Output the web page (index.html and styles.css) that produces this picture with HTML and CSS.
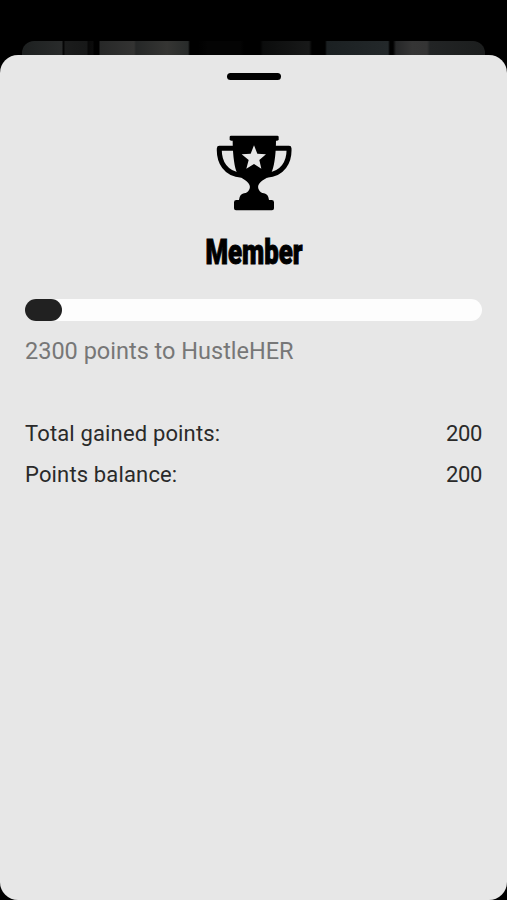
FILE: index.html
```html
<!DOCTYPE html>
<html lang="en">
<head>
  <meta charset="UTF-8" />
  <title>Member</title>
  <link rel="stylesheet" href="styles.css">
</head>
<body>
  <div class="backdrop"></div>
  <div class="sheet">
    <div class="handle"></div>
    <svg class="trophy" viewBox="63 29 228 228">
      <path d="M108 31H247Q251 31 251 35V42Q251 46 246 46H109Q104 46 104 42V35Q104 31 108 31Z"/>
      <path d="M113 44H243C243 75 240 115 231 138C225 156 208 161 197 170C189 178 187 185 192 194Q196 203 207 204Q220 206 222 224H230Q237 224 237 231V249Q237 255 231 255H123Q117 255 117 249V231Q117 224 124 224H132Q134 206 147 204Q158 203 162 194C167 185 165 178 157 170C147 161 131 156 124 138C116 115 113 75 113 44Z"/>
      <path class="handles" d="M117 69H73C71 110 92 147 140 150M239 69H282C284 110 263 147 215 150"/>
      <path class="star" d="M177 60L187 85L213 87L193 104L199 130L177 116L154 130L161 104L140 87L167 85Z"/>
    </svg>
    <h2><span>Member</span></h2>
    <div class="progress">
      <div class="bar" style="width: 8%"></div>
    </div>
    <p class="next">2300 points to HustleHER</p>
    <div class="row">
      <span class="label">Total gained points:</span>
      <span class="value">200</span>
    </div>
    <div class="row">
      <span class="label">Points balance:</span>
      <span class="value">200</span>
    </div>
  </div>
</body>
</html>
```

FILE: styles.css
```css
body {
  background-color: #000;
  font-family: Roboto, "Liberation Sans", sans-serif;
  display: flex;
  flex-direction: column;
  height: 900px;
  margin: 0;
  overflow: hidden;
}

.backdrop {
  height: 14px;
  margin: 41px 22px 0;
  border-radius: 12px 12px 0 0;
  background: linear-gradient(90deg,
    #1d2020 0, #292b2b 40px, #060606 41px, #060606 42px,
    #1b1c1c 43px, #171818 65px, #080808 66px, #0b0b0b 71px,
    #000 72px, #000 77px, #272828 78px, #333332 112px,
    #252727 114px, #353533 145px, #282b2a 166px, #000 168px,
    #000 176px, #040404 186px, #040404 218px, #000 222px,
    #000 238px, #0b0c0c 241px, #181919 287px, #000 290px,
    #000 303px, #1b2022 305px, #23282a 366px, #000 368px,
    #000 371px, #262728 374px, #353535 390px, #343434 405px,
    #222425 408px, #1c1e1e 462px);
}

.sheet {
  flex: 1;
  display: flex;
  flex-direction: column;
  box-sizing: border-box;
  padding: 18px 25px 0;
  border-radius: 18px;
  background-color: #e7e7e7;
}

.handle {
  width: 54px;
  height: 7px;
  margin-left: 202px;
  border-radius: 4px;
  background-color: #000;
}

.trophy {
  width: 76px;
  height: 76px;
  margin: 55px 0 0 191px;
}

.handles {
  fill: none;
  stroke: #000;
  stroke-width: 15;
  stroke-linejoin: round;
}

.star {
  fill: #e7e7e7;
}

h2 {
  height: 42px;
  margin: 21px 0 0;
  color: #000;
  font-size: 35px;
  font-weight: 900;
  line-height: 42px;
  text-align: center;
}

h2 span {
  display: inline-block;
  transform: scaleX(0.735);
  -webkit-text-stroke: 1px #000;
}

.progress {
  height: 22px;
  margin-top: 25px;
  border-radius: 11px;
  background-color: #fdfdfd;
}

.bar {
  height: 22px;
  border-radius: 11px;
  background-color: #212121;
}

.next {
  height: 30px;
  margin: 15px 0 53px;
  color: #777;
  font-size: 23.5px;
  font-weight: 400;
  line-height: 30px;
  white-space: nowrap;
}

.row {
  display: flex;
  justify-content: space-between;
  height: 41px;
  color: #2a2a2a;
  font-size: 22px;
  font-weight: 400;
  line-height: 30px;
}

.label {
  letter-spacing: 0.15px;
}

.value {
  letter-spacing: -0.4px;
}
```
